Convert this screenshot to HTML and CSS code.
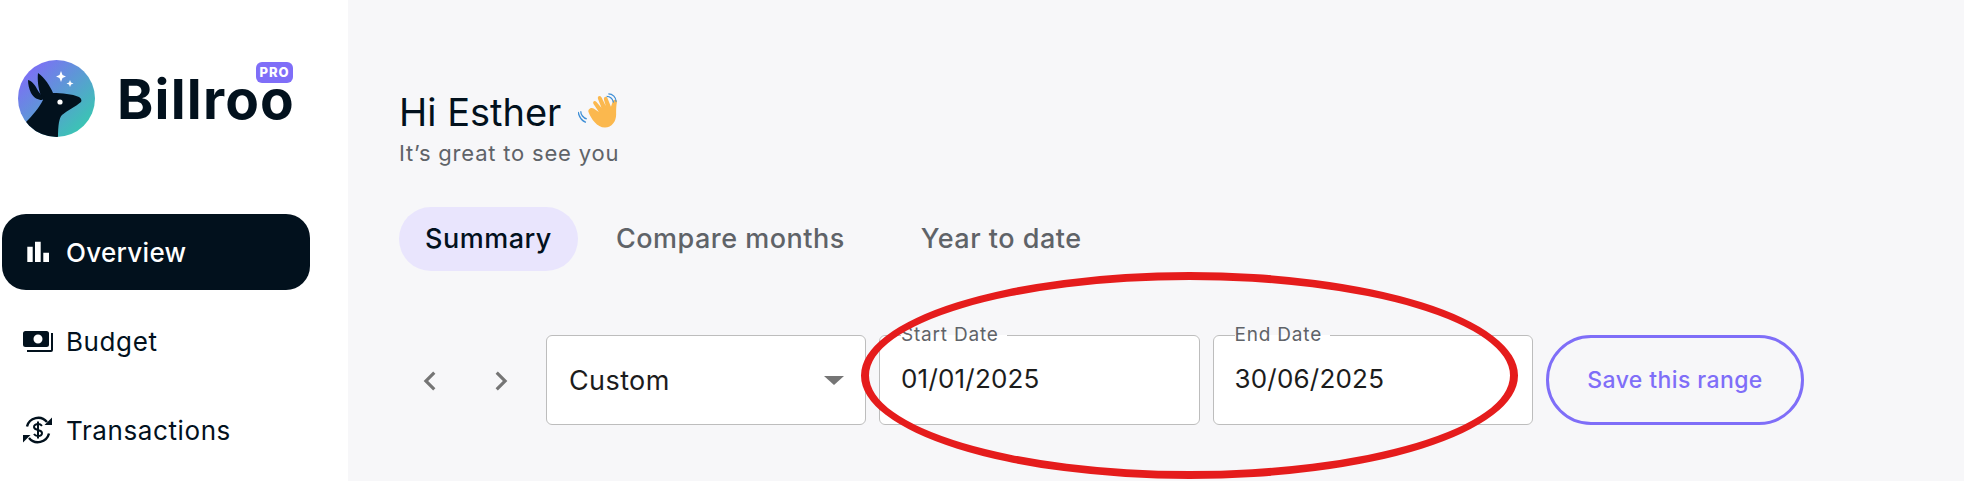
FILE: index.html
```html
<html>
<head>
<link rel="stylesheet" href="styles.css">
</head>
<body>

<div class="app">
    <!-- sidebar -->
    <div class="side">
        <div class="logo">
            <svg class="mark" width="77" height="77" viewBox="0 0 77 77">
                <defs>
                    <linearGradient id="roo_bg" x1="0.1" y1="0.1" x2="0.9" y2="0.9">
                        <stop offset="0" stop-color="#7f6cf8"/>
                        <stop offset="1" stop-color="#37c9b0"/>
                    </linearGradient>
                    <clipPath id="roo_clip"><circle cx="38.5" cy="38.5" r="38.5"/></clipPath>
                </defs>
                <circle cx="38.5" cy="38.5" r="38.5" fill="url(#roo_bg)"/>
                <g clip-path="url(#roo_clip)" fill="#02111d">
                    <path d="M20 13C27 18 32 26 35 33C44 33 54 34 61 37C63 38 64 40 63 42C57 47 50 50 44 55C41 58 40 66 40 78L0 78L8 62C14 56 21 48 25 40C21 33 19 22 20 13Z"/>
                    <path d="M10 20C14 21 17 25 19 29C21 33 24 36 27 37L24 40C20 40 16 38 13 33C11 29 10 24 10 20Z"/>
                </g>
                <circle cx="42" cy="42" r="2.6" fill="#fff"/>
                <path d="M43 11L44.5 15L48 16.500L44.500 18L43 22L41.500 18L38 16.500L41.500 15Z" fill="#fff"/>
                <path d="M52 20L53 22.500L55.500 23.500L53 24.500L52 27L51 24.500L48.500 23.500L51 22.500Z" fill="#fff"/>
            </svg>
            <span class="brand">Billroo</span>
            <span class="pro">PRO</span>
        </div>

        <div class="nav">
            <div class="item on">
                <svg width="30" height="30" viewBox="0 0 30 30" fill="#fff"><path d="M4.300 9.700h5.400V25H4.300zM12 4.700h5.700V25H12zM20.300 15.700H26V25h-5.700z"/></svg>
                <span>Overview</span>
            </div>
            <div class="item">
                <svg width="30" height="30" viewBox="0 0 30 30" fill="#02111d">
                    <path d="M2.500 5h21a2.500 2.500 0 0 1 2.500 2.500v11a2.500 2.500 0 0 1-2.500 2.500h-21A2.500 2.500 0 0 1 0 18.500v-11A2.500 2.500 0 0 1 2.500 5ZM15 8.500a4.500 4.500 0 1 0 0 9a4.500 4.500 0 0 0 0-9Z" fill-rule="evenodd"/>
                    <path d="M29 7v17a1 1 0 0 1-1 1H4" fill="none" stroke="#02111d" stroke-width="2"/>
                </svg>
                <span>Budget</span>
            </div>
            <div class="item">
                <svg width="30" height="30" viewBox="0 0 30 30" fill="none" stroke="#02111d" stroke-width="2.400">
                    <path d="M4 11.500A11.500 11.500 0 0 1 24 7"/>
                    <path d="M26 18.500A11.500 11.500 0 0 1 6 23"/>
                    <path d="M29 2.500V10H21.500Z" fill="#02111d" stroke="none"/>
                    <path d="M0 27.500V20H7.500Z" fill="#02111d" stroke="none"/>
                    <path d="M19 10.800C18 9.600 16.500 9 15 9C12.800 9 11 10.200 11 12C11 16 19 14 19 18C19 19.800 17.200 21 15 21C13.300 21 11.800 20.300 11 19M15 6.500V23.500" stroke-width="2"/>
                </svg>
                <span>Transactions</span>
            </div>
        </div>
    </div>

    <!-- main area -->
    <div class="main">
        <div class="hello">
            <span>Hi Esther</span>
            <svg class="wave" width="40" height="38" viewBox="0 0 46 44">
                <path d="M12 22C15 30 22 40 31 40C39 40 44 33 44 25C44 20 44 14 45 10C45 7 41 7 40 10L38 16L34 6C33 3 29 4 30 8L32 15L27 5C25 2 22 4 23 7L27 17L21 10C19 8 16 10 18 13L24 22L18 18C15 16 11 19 12 22Z" fill="#fbb84e"/>
                <path d="M33 2C37 2 40 5 41 9M35 -1C40 -1 44 3 44 8" fill="none" stroke="#3f8fd6" stroke-width="1.500" transform="translate(0 2)"/>
                <path d="M3 21C3 25 6 29 10 30M0 22C1 27 4 32 9 34" fill="none" stroke="#3f8fd6" stroke-width="1.500"/>
            </svg>
        </div>
        <div class="sub">It’s great to see you</div>

        <div class="tabs">
            <div class="tab on">Summary</div>
            <div class="tab">Compare months</div>
            <div class="tab">Year to date</div>
        </div>

        <div class="ctrl">
            <div class="arrows">
                <svg width="38" height="38" viewBox="0 0 24 24" fill="#757575"><path d="M15.410 7.410 14 6l-6 6 6 6 1.410-1.410L10.830 12z"/></svg>
                <svg width="38" height="38" viewBox="0 0 24 24" fill="#757575"><path d="M10 6 8.590 7.410 13.170 12l-4.580 4.590L10 18l6-6z"/></svg>
            </div>
            <div class="box pick">
                <span>Custom</span>
                <span class="caret"></span>
            </div>
            <fieldset class="box date">
                <legend>Start Date</legend>
                <span>01/01/2025</span>
            </fieldset>
            <fieldset class="box date">
                <legend>End Date</legend>
                <span>30/06/2025</span>
            </fieldset>
            <div class="save">Save this range</div>
        </div>
    </div>
</div>

<!-- hand drawn ring on top of the shot -->
<div class="ring"></div>

</body>
</html>
```

FILE: styles.css
```css
html, body {
    margin: 0;
    padding: 0;
    height: 481px;
    overflow: hidden;
    font-family: Inter, 'Liberation Sans', sans-serif;
    color: #02111d;
}
.app {
    display: flex;
    height: 481px;
}
.side {
    width: 348px;
    flex: none;
    background-color: #fff;
}
.logo {
    position: relative;
    display: flex;
    align-items: center;
    gap: 22px;
    padding: 60px 0 0 18px;
    height: 77px;
}
.brand {
    font-size: 55px;
    line-height: 55px;
    font-weight: 700;
    letter-spacing: 1.2px;
    margin-top: 1px;
}
.pro {
    position: absolute;
    left: 256px;
    top: 62px;
    width: 37px;
    height: 21px;
    line-height: 21px;
    border-radius: 6px;
    background-color: #7f6ef8;
    color: #fff;
    font-size: 13px;
    font-weight: 800;
    letter-spacing: 1px;
    text-align: center;
}
.nav {
    display: flex;
    flex-direction: column;
    gap: 13px;
    margin: 77px 0 0 2px;
    width: 308px;
}
.item {
    display: flex;
    align-items: center;
    gap: 13px;
    height: 76px;
    padding-left: 21px;
    border-radius: 24px;
    font-size: 26px;
    font-weight: 400;
    letter-spacing: 0.6px;
}
.item.on {
    background-color: #02111d;
    color: #fff;
    font-weight: 500;
    letter-spacing: 0.3px;
}
.main {
    flex: 1;
    background-color: #f7f7f9;
    padding: 88px 0 0 51px;
}
.hello {
    display: flex;
    align-items: center;
    gap: 17px;
    height: 48px;
    font-size: 38px;
}
.sub {
    font-size: 22px;
    letter-spacing: 0.8px;
    color: #5f6368;
    margin-top: 4px;
}
.tabs {
    display: flex;
    margin-top: 41px;
}
.tab {
    height: 64px;
    line-height: 64px;
    padding: 0 38px;
    border-radius: 32px;
    font-size: 27px;
    font-weight: 500;
    letter-spacing: 0.5px;
    color: #5f6368;
}
.tab.on {
    padding: 0 26px;
    background-color: #e9e5fd;
    color: #02111d;
}
.ctrl {
    display: flex;
    align-items: flex-end;
    gap: 13px;
    margin-top: 54px;
}
.arrows {
    display: flex;
    gap: 33px;
    width: 133px;
    height: 89px;
    align-items: center;
    padding-left: 12px;
    box-sizing: border-box;
    margin-right: 1px;
}
.box {
    box-sizing: border-box;
    width: 320px;
    height: 90px;
    margin: 0;
    background-color: #fff;
    border: 1px solid #bdbdbd;
    border-radius: 6px;
    font-size: 26px;
    color: #1c1c1c;
}
.pick {
    display: flex;
    align-items: center;
    justify-content: space-between;
    padding: 0 21px 0 22px;
    font-size: 27px;
    letter-spacing: 0.4px;
}
.caret {
    border-left: 10px solid transparent;
    border-right: 10px solid transparent;
    border-top: 9px solid #757575;
}
.date {
    width: 320.5px;
    padding: 0 0 0 21px;
    line-height: 68px;
    height: 100px;
    letter-spacing: 0.2px;
}
.date legend {
    font-size: 19px;
    line-height: 20px;
    letter-spacing: 0.8px;
    color: #5f6368;
    padding: 0 8px 0 0;
}
.save {
    box-sizing: border-box;
    width: 258px;
    height: 90px;
    line-height: 84px;
    text-align: center;
    border: 3px solid #7f6ef8;
    border-radius: 45px;
    color: #7f6ef8;
    font-size: 23px;
    font-weight: 500;
    letter-spacing: 0.4px;
}
.ring {
    position: absolute;
    box-sizing: border-box;
    left: 861px;
    top: 272px;
    width: 657px;
    height: 207px;
    border: 8px solid #e51c1c;
    border-radius: 50%;
}
```
